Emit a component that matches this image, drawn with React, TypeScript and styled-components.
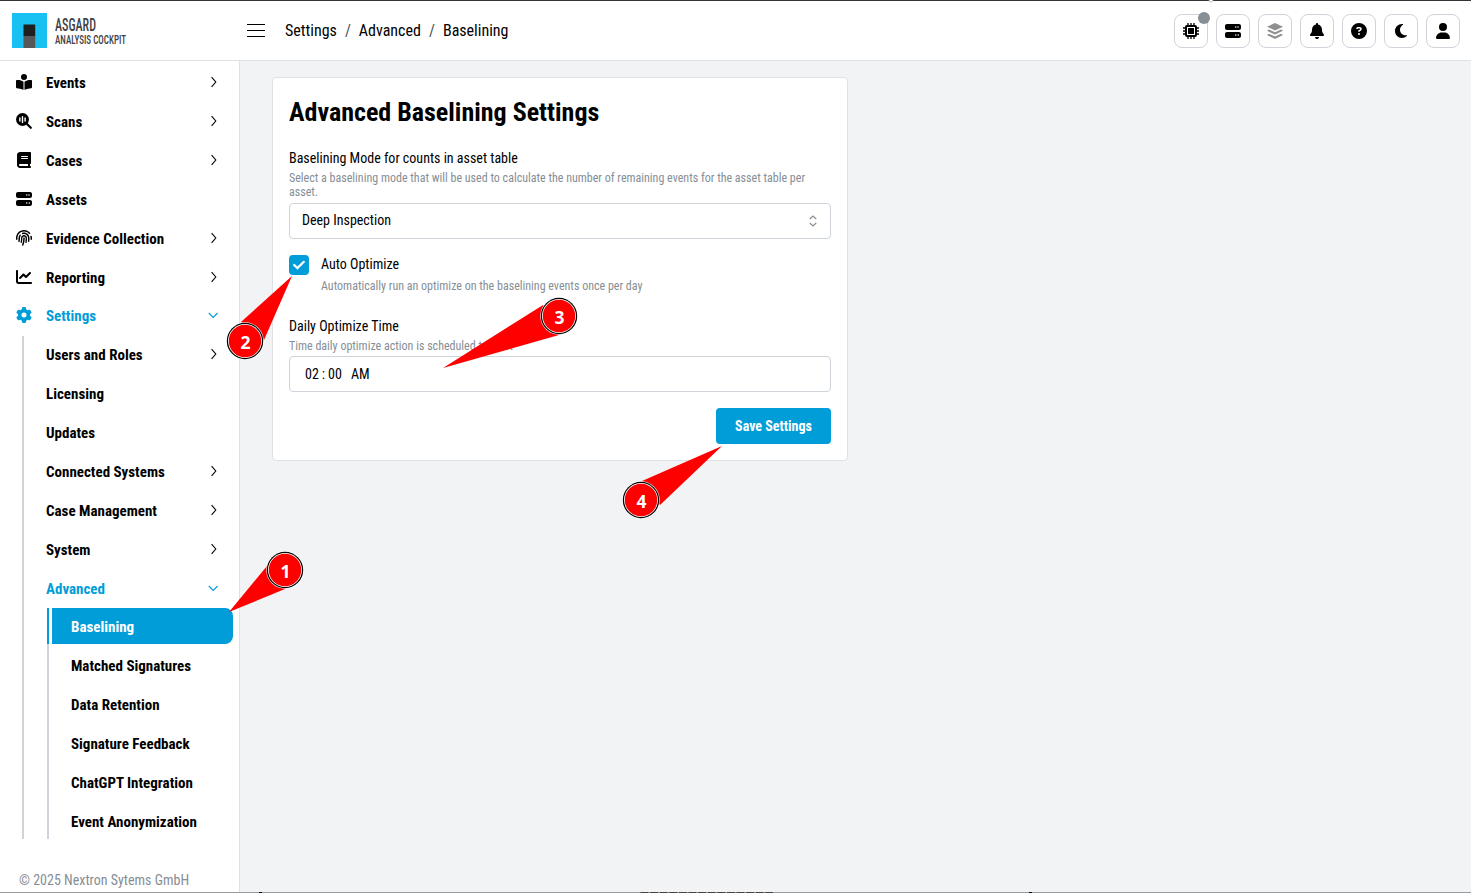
import React from "react";
import styled, { createGlobalStyle, css } from "styled-components";
import {
  FaBell,
  FaBook,
  FaBookOpenReader,
  FaChartLine,
  FaCircleQuestion,
  FaFingerprint,
  FaGear,
  FaMoon,
  FaServer,
  FaUser,
} from "react-icons/fa6";

const blue = "#019dd9";
const line = "#dee2e6";
const inputLine = "#ced4da";
const muted = "#868e96";

const GlobalStyle = createGlobalStyle`
  *, *::before, *::after { box-sizing: border-box; }
  body {
    margin: 0;
    font-family: "Roboto Condensed", Roboto, sans-serif;
    font-stretch: 75%;
    font-size: 14px;
    color: #000;
    background: #f1f3f5;
  }
  button, input { font: inherit; font-stretch: 75%; }
`;

const Page = styled.div`
  position: relative;
  display: grid;
  grid-template-columns: 240px 1fr;
  grid-template-rows: 61px 1fr;
  width: 1471px;
  height: 893px;
  overflow: hidden;
`;

const Header = styled.header`
  grid-column: 1 / -1;
  display: flex;
  align-items: center;
  padding: 0 11px 0 12px;
  background: #fff;
  border-top: 1px solid #343238;
  border-bottom: 1px solid ${line};
`;

const Brand = styled.div`
  display: flex;
  gap: 8px;
  width: 120px;
  height: 35px;
  flex: none;
  margin-bottom: 1px;
`;

const BrandName = styled.svg`
  width: 76px;
  height: 35px;
  overflow: visible;
`;

const Burger = styled.button`
  display: flex;
  flex-direction: column;
  justify-content: space-between;
  width: 18px;
  height: 13px;
  margin: 0 20px 0 115px;
  padding: 0;
  border: 0;
  background: none;
`;

const BurgerBar = styled.span`
  height: 1px;
  background: #000;
`;

const Crumbs = styled.nav`
  display: flex;
  flex: 1;
  gap: 8px;
  font-size: 16px;
  line-height: 20px;
`;

const Slash = styled.span`
  color: #495057;
`;

const Actions = styled.div`
  display: flex;
  gap: 8px;
`;

const IconButton = styled.button<{ $dim?: boolean }>`
  position: relative;
  display: flex;
  align-items: center;
  justify-content: center;
  width: 34px;
  height: 34px;
  padding: 0;
  font-size: 16px;
  color: ${(p) => (p.$dim ? "#8f8f8f" : "#000")};
  background: #fff;
  border: 1px solid ${inputLine};
  border-radius: 8px;
`;

const StatusDot = styled.span`
  position: absolute;
  top: -3px;
  right: -3px;
  width: 12px;
  height: 12px;
  border-radius: 50%;
  background: ${muted};
`;

const Sidebar = styled.aside`
  display: flex;
  flex-direction: column;
  background: #fff;
  border-right: 1px solid ${line};
  padding-top: 3.05px;
`;

const Row = styled.a<{ $open?: boolean; $active?: boolean }>`
  display: flex;
  align-items: center;
  height: 36px;
  margin-bottom: 2.9px;
  padding-right: 19px;
  font-size: 15px;
  font-weight: 700;
  line-height: 18px;
  color: ${(p) => (p.$active ? "#fff" : p.$open ? blue : "#000")};
  ${(p) =>
    p.$active &&
    css`
      position: relative;
      background: ${blue};
      border-radius: 0 8px 8px 0;
      &::before {
        content: "";
        position: absolute;
        left: -5px;
        top: 0;
        bottom: 0;
        width: 2px;
        background: ${blue};
      }
    `}
`;

const RowIcon = styled.span`
  display: flex;
  justify-content: center;
  width: 16px;
  margin: 0 14px 0 16px;
  font-size: 16px;
`;

const RowLabel = styled.span`
  flex: 1;
  padding-top: 2px;
`;

const Branch = styled.div`
  margin-left: 22px;
  padding-left: 22px;
  border-left: 2px solid ${inputLine};
`;

const Leaves = styled.div`
  margin: -0.1px 6px 0 1px;
  padding-left: 3px;
  border-left: 2px solid ${inputLine};
  ${Row} {
    padding-left: 19px;
  }
  ${Row}:last-child {
    margin-bottom: 0;
  }
`;

const Copyright = styled.footer`
  margin: auto 0 4px 19px;
  font-size: 14px;
  line-height: 18px;
  color: ${muted};
`;

const Main = styled.main`
  padding: 16px 32px;
`;

const Card = styled.section`
  width: 576px;
  padding: 16px;
  background: #fff;
  border: 1px solid ${line};
  border-radius: 4px;
`;

const Title = styled.h1`
  margin: 0 0 18px;
  font-size: 26px;
  line-height: 36px;
  font-weight: 700;
`;

const Label = styled.div`
  font-size: 14px;
  line-height: 20px;
`;

const Hint = styled.div<{ $gap?: number }>`
  margin-top: ${(p) => p.$gap ?? 3}px;
  font-size: 12px;
  line-height: 14px;
  color: ${muted};
`;

const Field = styled.div<{ $gap: number }>`
  display: flex;
  align-items: center;
  justify-content: space-between;
  height: 36px;
  margin-top: ${(p) => p.$gap}px;
  padding: 0 11px 0 12px;
  line-height: 16px;
  border: 1px solid ${inputLine};
  border-radius: 4px;
`;

const FieldValue = styled.span`
  padding-bottom: 2px;
`;

const CheckRow = styled.div`
  display: flex;
  gap: 12px;
  margin: 15px 0 23px;
`;

const CheckBox = styled.span`
  display: flex;
  align-items: center;
  justify-content: center;
  width: 20px;
  height: 20px;
  margin-top: 1px;
  border-radius: 4px;
  background: ${blue};
`;

const TimeValue = styled.div`
  display: flex;
  gap: 3px;
  padding-left: 3px;
`;

const Meridiem = styled.span`
  margin-left: 6px;
`;

const FormEnd = styled.div`
  display: flex;
  justify-content: flex-end;
  margin-top: 16px;
`;

const SaveButton = styled.button`
  width: 115px;
  height: 36px;
  padding: 0;
  border: 0;
  border-radius: 4px;
  font-size: 14px;
  font-weight: 700;
  color: #fff;
  background: ${blue};
`;

const Overlay = styled.svg`
  position: absolute;
  inset: 0;
  pointer-events: none;
`;

const Chevron = ({ open }: { open?: boolean }) => (
  <svg width="12" height="12" viewBox="0 0 12 12" fill="none" stroke="currentColor" strokeWidth="1.1">
    <path d={open ? "M0.8 4 5.2 8.4 9.6 4" : "M3.6 1.2 7.8 6 3.6 10.8"} />
  </svg>
);

const ScanIcon = () => (
  <svg width="16" height="16" viewBox="0 0 16 16" fill="none" strokeLinecap="round">
    <circle cx="6.5" cy="6.5" r="6.5" fill="currentColor" />
    <path d="M10.5 10.5 14.8 14.8" stroke="currentColor" strokeWidth="2.2" />
    <path d="M3.9 5v3M6.5 3.6v5.8M9.1 5v3" stroke="#fff" strokeWidth="1.4" />
  </svg>
);

const ChipIcon = () => (
  <svg width="16" height="16" viewBox="0 0 16 16" fill="none" stroke="currentColor">
    <path d="M5 0v16M8 0v16M11 0v16M0 5h16M0 8h16M0 11h16" strokeWidth="1.3" />
    <rect x="2" y="2" width="12" height="12" rx="2" fill="currentColor" stroke="none" />
    <rect x="4.5" y="4.5" width="7" height="7" stroke="#fff" strokeWidth="1" />
  </svg>
);

const LayersIcon = () => (
  <svg width="16" height="16" viewBox="0 0 16 16" fill="currentColor">
    <path d="M8 0 16 3.7 8 7.4 0 3.7Z" />
    <path d="M1.9 6.5 8 9.2 14.1 6.5 16 7.7 8 11.6 0 7.7Z" />
    <path d="M1.9 10.8 8 13.5 14.1 10.8 16 12 8 15.9 0 12Z" />
  </svg>
);

type Item = { label: string; icon?: React.ReactNode; arrow?: boolean; open?: boolean };

const topItems: Item[] = [
  { label: "Events", icon: <FaBookOpenReader />, arrow: true },
  { label: "Scans", icon: <ScanIcon />, arrow: true },
  { label: "Cases", icon: <FaBook />, arrow: true },
  { label: "Assets", icon: <FaServer /> },
  { label: "Evidence Collection", icon: <FaFingerprint />, arrow: true },
  { label: "Reporting", icon: <FaChartLine />, arrow: true },
  { label: "Settings", icon: <FaGear />, arrow: true, open: true },
];

const settingsItems: Item[] = [
  { label: "Users and Roles", arrow: true },
  { label: "Licensing" },
  { label: "Updates" },
  { label: "Connected Systems", arrow: true },
  { label: "Case Management", arrow: true },
  { label: "System", arrow: true },
  { label: "Advanced", arrow: true, open: true },
];

const advancedItems = [
  "Baselining",
  "Matched Signatures",
  "Data Retention",
  "Signature Feedback",
  "ChatGPT Integration",
  "Event Anonymization",
];

const NavRow = ({ item }: { item: Item }) => (
  <Row $open={item.open}>
    {item.icon && <RowIcon>{item.icon}</RowIcon>}
    <RowLabel>{item.label}</RowLabel>
    {item.arrow && <Chevron open={item.open} />}
  </Row>
);

const callouts = [
  { n: 1, x: 285, y: 570, wedge: "229,612 267,566 285,589" },
  { n: 2, x: 245, y: 341, wedge: "292,276 241,322 264,340" },
  { n: 3, x: 559, y: 316, wedge: "443,368 543,305 559,335" },
  { n: 4, x: 641, y: 500, wedge: "722,446 642,481 660,505" },
];

const Callouts = () => (
  <Overlay width="1471" height="893" viewBox="0 0 1471 893">
    {callouts.map((c) => (
      <g key={c.n}>
        <polygon points={c.wedge} fill="#f00" />
        <circle cx={c.x} cy={c.y} r="18.7" fill="#fff" />
        <circle cx={c.x} cy={c.y} r="18.2" fill="#000" />
        <circle cx={c.x} cy={c.y} r="17" fill="#fff" />
        <circle cx={c.x} cy={c.y} r="16.2" fill="#f00" />
        <text
          x={c.x + 0.5}
          y={c.y + 7.5}
          textAnchor="middle"
          fill="#fff"
          fontFamily="'Noto Sans', sans-serif"
          fontStretch="100%"
          fontWeight="700"
          fontSize="17.5"
        >
          {c.n}
        </text>
      </g>
    ))}
  </Overlay>
);

const WindowEdges = () => (
  <Overlay width="1471" height="893" viewBox="0 0 1471 893">
    <circle cx="1211" cy="0" r="2" fill="#fff" stroke="#aaa" strokeWidth="0.7" />
    <rect y="892" width="1471" height="1" fill="#999b9d" />
    <path d="M640.5 892.5H773" stroke="#444" strokeDasharray="8 1.6" />
    <path d="M259 892.5h3M1029 892.5h3" stroke="#000" />
  </Overlay>
);

export default function App() {
  return (
    <>
      <GlobalStyle />
      <Page>
        <Header>
          <Brand>
            <svg width="35" height="35" viewBox="0 0 35 35">
              <rect width="35" height="35" fill="#19c0f2" />
              <rect x="11.5" y="11.5" width="11.7" height="11.5" fill="#1f1f1f" />
              <rect x="11.5" y="23" width="11.7" height="12" fill="#575757" />
            </svg>
            <BrandName viewBox="0 0 76 35" fill="#3f4247">
              <g transform="translate(0 17.6) scale(1 1.45)" fontWeight="500">
                <text fontSize="12.5" textLength="41" lengthAdjust="spacingAndGlyphs">
                  ASGARD
                </text>
              </g>
              <g transform="translate(0 31) scale(1 1.3)" fontWeight="500">
                <text fontSize="10" textLength="71" lengthAdjust="spacingAndGlyphs">
                  ANALYSIS COCKPIT
                </text>
              </g>
            </BrandName>
          </Brand>
          <Burger aria-label="Menu">
            <BurgerBar />
            <BurgerBar />
            <BurgerBar />
          </Burger>
          <Crumbs>
            <span>Settings</span>
            <Slash>/</Slash>
            <span>Advanced</span>
            <Slash>/</Slash>
            <span>Baselining</span>
          </Crumbs>
          <Actions>
            <IconButton>
              <ChipIcon />
              <StatusDot />
            </IconButton>
            <IconButton><FaServer /></IconButton>
            <IconButton $dim><LayersIcon /></IconButton>
            <IconButton><FaBell /></IconButton>
            <IconButton><FaCircleQuestion /></IconButton>
            <IconButton><FaMoon /></IconButton>
            <IconButton><FaUser /></IconButton>
          </Actions>
        </Header>

        <Sidebar>
          {topItems.map((item) => (
            <NavRow key={item.label} item={item} />
          ))}
          <Branch>
            {settingsItems.map((item) => (
              <NavRow key={item.label} item={item} />
            ))}
            <Leaves>
              {advancedItems.map((label, i) => (
                <Row key={label} $active={i === 0}>
                  <RowLabel>{label}</RowLabel>
                </Row>
              ))}
            </Leaves>
          </Branch>
          <Copyright>© 2025 Nextron Sytems GmbH</Copyright>
        </Sidebar>

        <Main>
          <Card>
            <Title>Advanced Baselining Settings</Title>
            <Label>Baselining Mode for counts in asset table</Label>
            <Hint>
              Select a baselining mode that will be used to calculate the number of remaining events for the asset
              table per asset.
            </Hint>
            <Field $gap={4}>
              <FieldValue>Deep Inspection</FieldValue>
              <svg width="12" height="14" viewBox="0 0 12 14" fill="none" stroke={muted} strokeWidth="1.2">
                <path d="M2.8 5 6 2 9.2 5M2.8 9 6 12 9.2 9" />
              </svg>
            </Field>
            <CheckRow>
              <CheckBox>
                <svg width="12" height="10" viewBox="0 0 12 10" fill="none" stroke="#fff" strokeWidth="2.2" strokeLinecap="round">
                  <path d="M1.2 5 4.4 8.1 10.8 1.8" />
                </svg>
              </CheckBox>
              <div>
                <Label>Auto Optimize</Label>
                <Hint $gap={5}>Automatically run an optimize on the baselining events once per day</Hint>
              </div>
            </CheckRow>
            <Label>Daily Optimize Time</Label>
            <Hint>Time daily optimize action is scheduled to start</Hint>
            <Field $gap={3}>
              <TimeValue>
                <span>02</span>
                <span>:</span>
                <span>00</span>
                <Meridiem>AM</Meridiem>
              </TimeValue>
            </Field>
            <FormEnd>
              <SaveButton>Save Settings</SaveButton>
            </FormEnd>
          </Card>
        </Main>
        <WindowEdges />
        <Callouts />
      </Page>
    </>
  );
}
